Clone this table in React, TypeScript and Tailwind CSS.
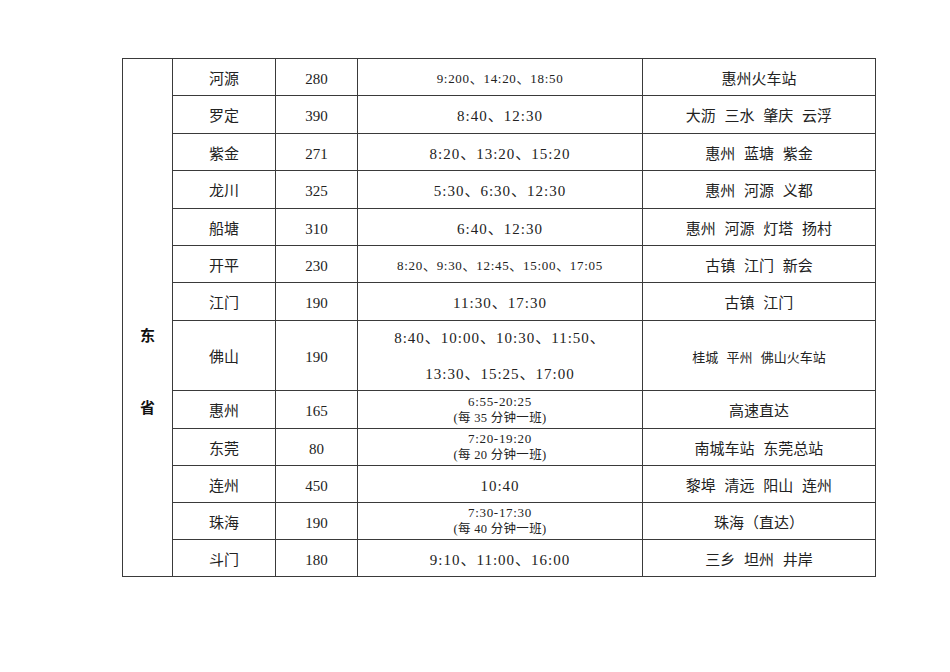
import React from "react";

type Row = {
  city: string;
  price: string;
  times: React.ReactNode;
  multi?: boolean;
  dest: React.ReactNode;
};

const T = ({ children }: { children: React.ReactNode }) => (
  <span className="text-[15px] tracking-[1px]">{children}</span>
);
const TS = ({ children }: { children: React.ReactNode }) => (
  <span className="text-[13px] tracking-[0.7px]">{children}</span>
);
const Two = ({ a, b }: { a: string; b: string }) => (
  <div className="flex flex-col items-center leading-[17px]">
    <span className="text-[13px] tracking-[0.7px]">{a}</span>
    <span className="text-[12.5px] tracking-[0.3px]">{b}</span>
  </div>
);
const D = ({ children }: { children: React.ReactNode }) => (
  <span className="text-[15px] [word-spacing:5px]">{children}</span>
);

const rows: Row[] = [
  { city: "河源", price: "280", times: <TS>9:200、14:20、18:50</TS>, dest: <D>惠州火车站</D> },
  { city: "罗定", price: "390", times: <T>8:40、12:30</T>, dest: <D>大沥 三水 肇庆 云浮</D> },
  { city: "紫金", price: "271", times: <T>8:20、13:20、15:20</T>, dest: <D>惠州 蓝塘 紫金</D> },
  { city: "龙川", price: "325", times: <T>5:30、6:30、12:30</T>, dest: <D>惠州 河源 义都</D> },
  { city: "船塘", price: "310", times: <T>6:40、12:30</T>, dest: <D>惠州 河源 灯塔 扬村</D> },
  { city: "开平", price: "230", times: <TS>8:20、9:30、12:45、15:00、17:05</TS>, dest: <D>古镇 江门 新会</D> },
  { city: "江门", price: "190", times: <T>11:30、17:30</T>, dest: <D>古镇 江门</D> },
  {
    city: "佛山",
    price: "190",
    multi: true,
    times: (
      <div className="flex flex-col items-center leading-[36px] text-[15px] tracking-[1px]">
        <span>8:40、10:00、10:30、11:50、</span>
        <span>13:30、15:25、17:00</span>
      </div>
    ),
    dest: <span className="text-[13px] [word-spacing:5px]">桂城 平州 佛山火车站</span>,
  },
  { city: "惠州", price: "165", multi: true, times: <Two a="6:55-20:25" b="(每 35 分钟一班)" />, dest: <D>高速直达</D> },
  { city: "东莞", price: "80", multi: true, times: <Two a="7:20-19:20" b="(每 20 分钟一班)" />, dest: <D>南城车站 东莞总站</D> },
  { city: "连州", price: "450", times: <T>10:40</T>, dest: <D>黎埠 清远 阳山 连州</D> },
  { city: "珠海", price: "190", multi: true, times: <Two a="7:30-17:30" b="(每 40 分钟一班)" />, dest: <D>珠海（直达）</D> },
  { city: "斗门", price: "180", times: <T>9:10、11:00、16:00</T>, dest: <D>三乡 坦州 井岸</D> },
];

export default function App() {
  return (
    <div className="min-h-[672px] w-full bg-white pl-[122px] pt-[58px] text-[#222] font-['Liberation_Serif','Noto_Sans_CJK_SC',serif]">
      <div className="grid w-[754px] grid-cols-[50px_103px_82px_285px_233px] grid-rows-[37px_38px_37px_38px_37px_37px_38px_70px_38px_37px_37px_37px_37px] border-l border-t border-[#3a3a3a]">
        <div className="row-span-13 flex flex-col items-center border-b border-r border-[#3a3a3a] pt-[241px] text-[15px] font-bold leading-[72px] text-[#111]">
          <span>东</span>
          <span>省</span>
        </div>
        {rows.map((r) => (
          <React.Fragment key={r.city}>
            <div className="flex items-center justify-center border-b border-r border-[#3a3a3a] pt-[4px] text-[15px]">
              {r.city}
            </div>
            <div className="flex items-center justify-center border-b border-r border-[#3a3a3a] pt-[4px] text-[15px]">
              {r.price}
            </div>
            {r.multi ? (
              <div className="flex items-center justify-center border-b border-r border-[#3a3a3a] whitespace-nowrap">
                {r.times}
              </div>
            ) : (
              <div className="flex items-center justify-center border-b border-r border-[#3a3a3a] pt-[4px] whitespace-nowrap">
                {r.times}
              </div>
            )}
            <div className="flex items-center justify-center border-b border-r border-[#3a3a3a] pt-[4px] whitespace-nowrap">
              {r.dest}
            </div>
          </React.Fragment>
        ))}
      </div>
    </div>
  );
}
